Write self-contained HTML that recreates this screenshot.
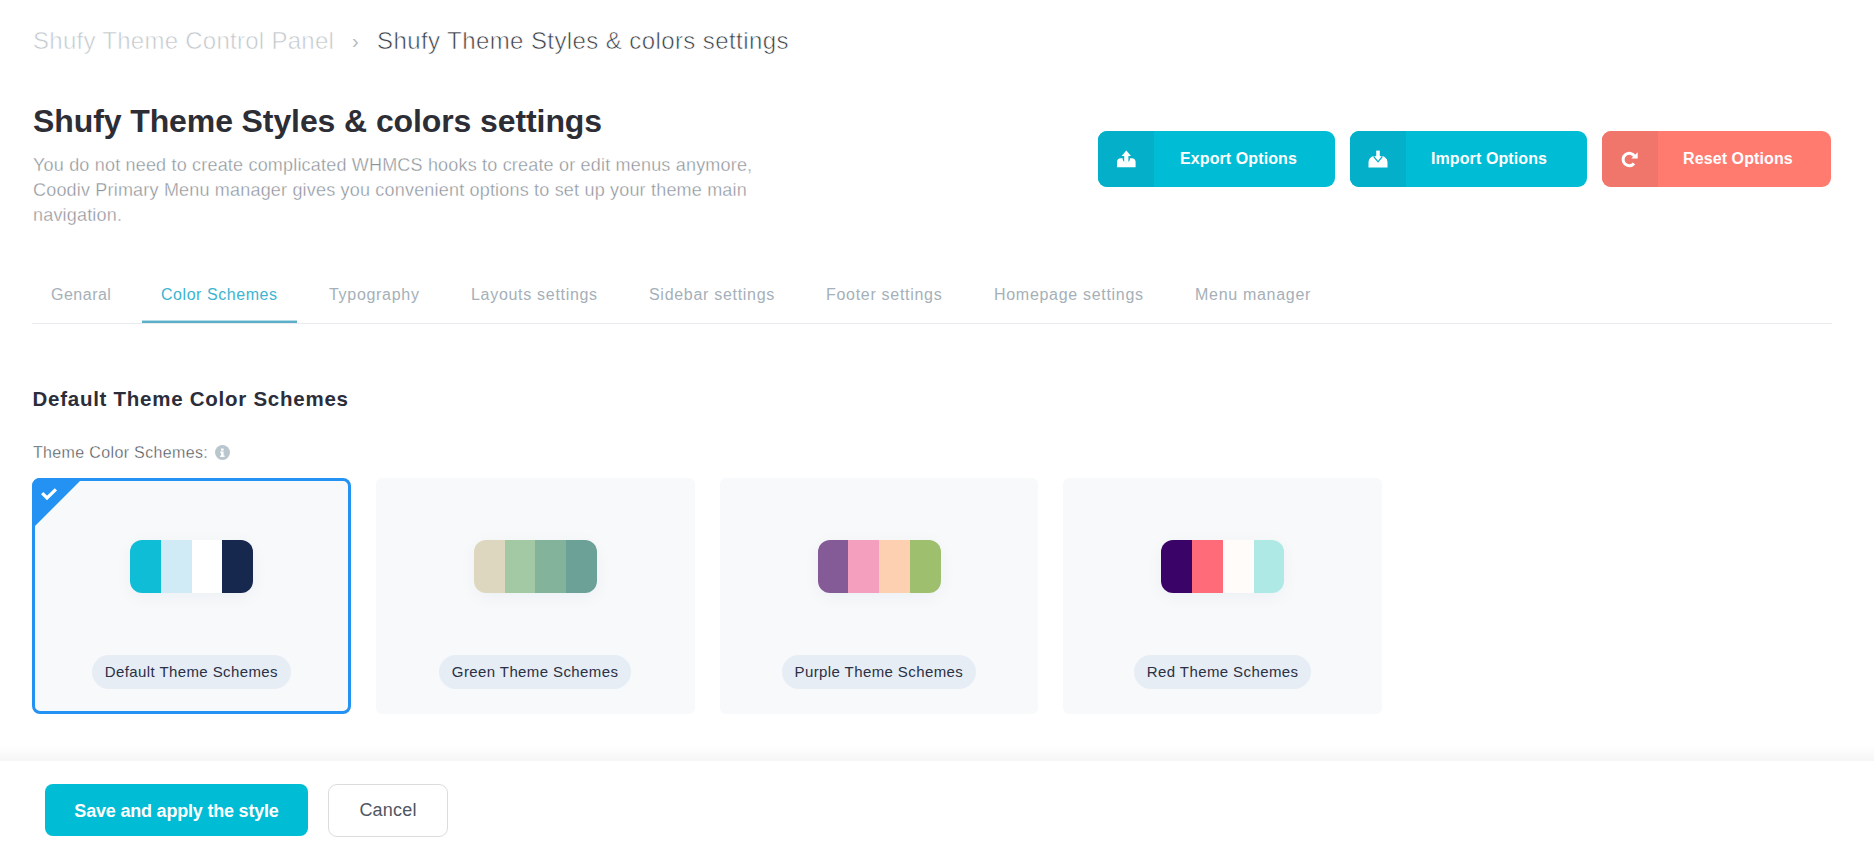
<!DOCTYPE html>
<html><head><meta charset="utf-8">
<style>
*{margin:0;padding:0;box-sizing:border-box}
html,body{width:1874px;height:850px;overflow:hidden;background:#fff;font-family:"Liberation Sans",sans-serif}
.a{position:absolute;white-space:nowrap;line-height:1}
.bc1{left:33px;top:29px;font-size:24px;color:#c2c7cc;-webkit-text-stroke:0.6px #fff;letter-spacing:0.27px}
.bcsep{left:352px;top:31px;font-size:20px;color:#b5b9be}
.bc2{left:377px;top:29px;font-size:24px;color:#383c43;-webkit-text-stroke:0.6px #fff;letter-spacing:0.41px}
.title{left:33px;top:105px;font-size:32px;font-weight:bold;color:#2d2e35;letter-spacing:-0.1px}
.desc{left:33px;top:153px;font-size:18px;line-height:25px;color:#8c9299;-webkit-text-stroke:0.35px #fff;letter-spacing:0.19px;white-space:normal;width:760px}
.btn{position:absolute;top:131px;height:56px;border-radius:9px;background:#00bcd4;overflow:hidden;color:#fff}
.btn .ic{position:absolute;left:0;top:0;width:56px;height:56px;background:#04b0c9}
.btn .tx{position:absolute;top:0;height:56px;line-height:56px;font-size:16px;font-weight:bold;letter-spacing:0.1px}
.btn.red{background:#ff7b6f}
.btn.red .ic{background:#f0756b}
.tabs{position:absolute;left:32px;top:323px;width:1800px;height:1px;background:#e9ebee}
.tab{top:287px;font-size:16px;color:#a5b0b8;letter-spacing:0.7px}
.tab.act{color:#3db4d1;letter-spacing:0.55px}
.uline{position:absolute;left:142px;top:321px;width:155px;height:2px;background:#5cafc8;box-shadow:0 -1px 0 rgba(92,175,200,.45)}
.h2{left:32.5px;top:388.5px;font-size:20.5px;font-weight:bold;color:#2b2e3a;letter-spacing:0.74px}
.lbl{left:33px;top:445px;font-size:16px;color:#474c53;-webkit-text-stroke:0.35px #fff;letter-spacing:0.35px}
.info{position:absolute;left:215px;top:445px;width:15px;height:15px;border-radius:50%;background:#bac6ce}
.card{position:absolute;top:478px;width:318.75px;height:236px;border-radius:6px;background:#f7f9fb}
.card.sel{border:3px solid #2492f2;border-radius:8px}
.card.sel .pal{left:95px;top:59px}
.card.sel .pillw{left:-3px;top:174px}
.pal{position:absolute;top:62px;left:98px;width:123px;height:53px;border-radius:12px;overflow:hidden;display:flex;box-shadow:0 4px 18px rgba(30,40,60,.045)}
.pal div{flex:1}
.pillw{position:absolute;left:0;top:177px;width:318.75px;text-align:center}
.pill{display:inline-block;height:34px;border-radius:17px;background:#e6edf4;color:#2b3045;font-size:15px;line-height:34px;padding:0 13px;letter-spacing:0.4px;white-space:nowrap}
.footer{position:absolute;left:-60px;top:761px;width:1994px;height:120px;background:#fff;box-shadow:0 -4px 16px rgba(0,0,0,.06)}
.save{position:absolute;left:45px;top:784px;width:263px;height:52px;padding-top:1px;border-radius:8px;background:#00bcd4;color:#fff;font-size:18px;font-weight:bold;line-height:52px;text-align:center;letter-spacing:-0.2px}
.cancel{position:absolute;left:328px;top:784px;width:120px;height:53px;border-radius:9px;border:1px solid #dcdcdc;color:#50565f;font-size:18px;line-height:51px;text-align:center;letter-spacing:0.2px}
</style></head>
<body>
<div class="a bc1">Shufy Theme Control Panel</div>
<div class="a bcsep">&#8250;</div>
<div class="a bc2">Shufy Theme Styles &amp; colors settings</div>
<div class="a title">Shufy Theme Styles &amp; colors settings</div>
<div class="a desc">You do not need to create complicated WHMCS hooks to create or edit menus anymore,<br>Coodiv Primary Menu manager gives you convenient options to set up your theme main<br>navigation.</div>

<div class="btn" style="left:1098px;width:237px"><div class="ic"><svg width="56" height="56" viewBox="0 0 56 56" style="position:absolute;left:0;top:0"><g transform="translate(19,19.6)" fill="#fff"><path d="M4.6 5.4 L9.3 0 L14 5.4 Z"/><rect x="7.2" y="5" width="4.2" height="7"/><path d="M0 16.6 L0 11.6 Q0 7.6 4 7.6 L5.6 7.6 Q5.6 11.7 9.3 11.7 Q13 11.7 13 7.6 L14.6 7.6 Q18.6 7.6 18.6 11.6 L18.6 16.6 Z"/></g></svg></div><div class="tx" style="left:82px">Export Options</div></div>
<div class="btn" style="left:1350px;width:237px"><div class="ic"><svg width="56" height="56" viewBox="0 0 56 56" style="position:absolute;left:0;top:0"><g transform="translate(18.5,19.6)"><rect x="7.75" y="0" width="3.5" height="7" fill="#fff"/><path d="M0 16.8 L0 11.5 Q0 8 2.6 6.6 Q3.6 5.6 4.8 5.6 L14.2 5.6 Q15.4 5.6 16.4 6.6 Q19 8 19 11.5 L19 16.8 Z" fill="#fff"/><path d="M5.2 5.9 L9.5 11.2 L13.8 5.9" fill="none" stroke="#04b0c9" stroke-width="1.2"/><path d="M6.4 5.6 L12.6 5.6 L9.5 9.4 Z" fill="#fff"/></g></svg></div><div class="tx" style="left:81px">Import Options</div></div>
<div class="btn red" style="left:1602px;width:229px"><div class="ic"><svg width="56" height="56" viewBox="0 0 56 56" style="position:absolute;left:0;top:0"><g transform="translate(19.5,19.9)"><path d="M12.55 12.59 A6.2 6.2 0 1 1 13.17 5.5" fill="none" stroke="#fff" stroke-width="3"/><path d="M9.8 7.7 L16.2 7.7 L16.2 1.3 Z" fill="#fff"/></g></svg></div><div class="tx" style="left:81px">Reset Options</div></div>

<div class="tabs"></div>
<div class="uline"></div>
<div class="a tab" style="left:51px;letter-spacing:0.5px">Genaral</div>
<div class="a tab act" style="left:161px">Color Schemes</div>
<div class="a tab" style="left:329px">Typography</div>
<div class="a tab" style="left:471px">Layouts settings</div>
<div class="a tab" style="left:649px">Sidebar settings</div>
<div class="a tab" style="left:826px">Footer settings</div>
<div class="a tab" style="left:994px">Homepage settings</div>
<div class="a tab" style="left:1195px">Menu manager</div>

<div class="a h2">Default Theme Color Schemes</div>
<div class="a lbl">Theme Color Schemes:</div>
<div class="info"><svg width="15" height="15" style="position:absolute;left:0;top:0"><rect x="6" y="3.5" width="2.6" height="2.2" fill="#fff"/><path d="M5.2 6.6 L8.6 6.6 L8.6 10.6 L9.6 10.6 L9.6 11.9 L5.2 11.9 L5.2 10.6 L6.1 10.6 L6.1 7.9 L5.2 7.9 Z" fill="#fff"/></svg></div>

<div class="card sel" style="left:32px"><svg width="60" height="60" style="position:absolute;left:-3px;top:-3px"><path d="M0 9 Q0 0 9 0 L51 0 L0 51 Z" fill="#2492f2"/><path d="M10.2 15.2 L15 20 L23.9 11.4" fill="none" stroke="#fff" stroke-width="3.2"/></svg>
  <div class="pal"><div style="background:#10bdd6"></div><div style="background:#d0ebf5"></div><div style="background:#fff"></div><div style="background:#17284f"></div></div>
  <div class="pillw"><span class="pill">Default Theme Schemes</span></div>
</div>
<div class="card" style="left:375.75px">
  <div class="pal"><div style="background:#ddd7bf"></div><div style="background:#a2c9a4"></div><div style="background:#84b39c"></div><div style="background:#6ba197"></div></div>
  <div class="pillw"><span class="pill">Green Theme Schemes</span></div>
</div>
<div class="card" style="left:719.5px">
  <div class="pal"><div style="background:#845b97"></div><div style="background:#f49fbd"></div><div style="background:#fdd0b1"></div><div style="background:#9dbf6e"></div></div>
  <div class="pillw"><span class="pill">Purple Theme Schemes</span></div>
</div>
<div class="card" style="left:1063.25px">
  <div class="pal"><div style="background:#390367"></div><div style="background:#ff6b78"></div><div style="background:#fffcfa"></div><div style="background:#aee9e5"></div></div>
  <div class="pillw"><span class="pill">Red Theme Schemes</span></div>
</div>

<div class="footer"></div>
<div class="save">Save and apply the style</div>
<div class="cancel">Cancel</div>
</body></html>
